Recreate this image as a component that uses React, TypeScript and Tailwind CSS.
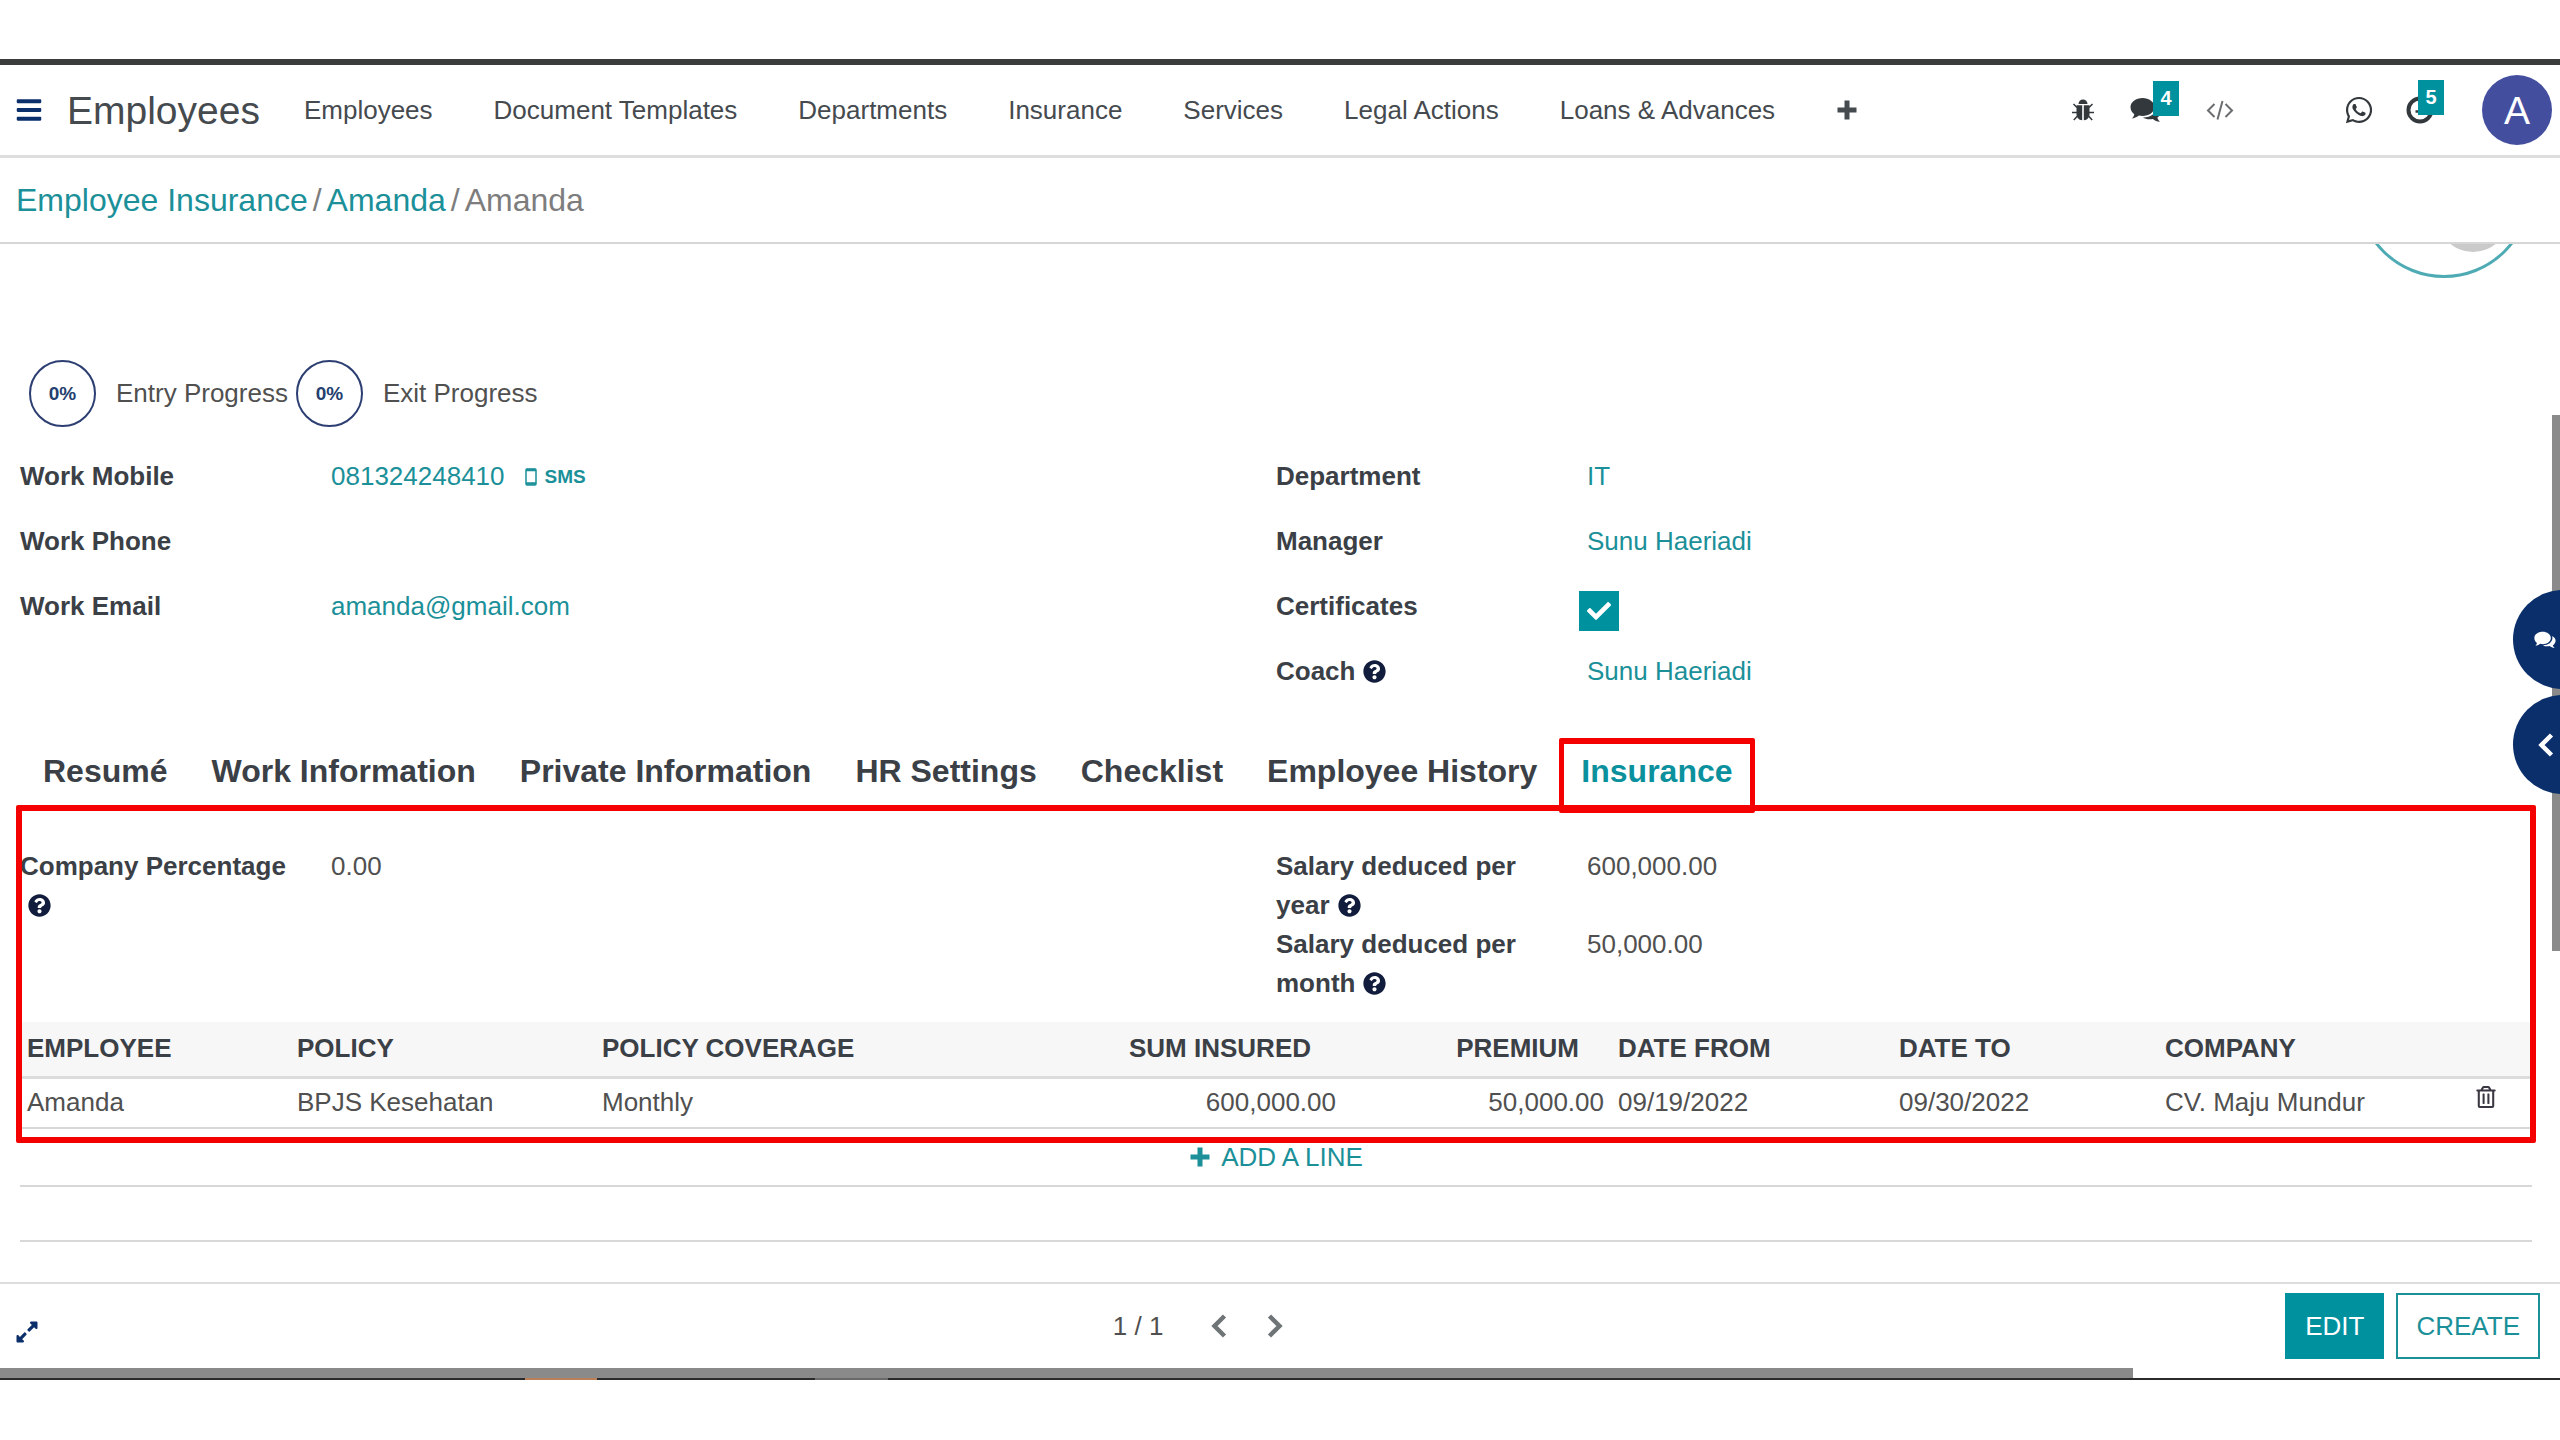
import React, { useState } from 'react';
import { FaBars, FaCheck, FaExpandAlt, FaQuestionCircle, FaRegTrashAlt, FaWhatsapp } from 'react-icons/fa';

const menuItems = ['Employees', 'Document Templates', 'Departments', 'Insurance', 'Services', 'Legal Actions', 'Loans & Advances'];

const tabs = ['Resumé', 'Work Information', 'Private Information', 'HR Settings', 'Checklist', 'Employee History', 'Insurance'];

const policies = [
  {
    employee: 'Amanda',
    policy: 'BPJS Kesehatan',
    coverage: 'Monthly',
    sumInsured: '600,000.00',
    premium: '50,000.00',
    dateFrom: '09/19/2022',
    dateTo: '09/30/2022',
    company: 'CV. Maju Mundur',
  },
];

const BugIcon = () => (
  <svg viewBox="0 0 22 22" className="w-[22px] h-[22px]" fill="currentColor" aria-hidden="true">
    <path d="M6.500 5a4.500 4.500 0 0 1 9 0z" />
    <path d="M4.500 6.200h5.700v15C6.500 21 4.500 18.500 4.500 14.500z" />
    <path d="M11.800 6.200h5.700v8.300c0 4-2 6.500-5.700 6.700z" />
    <path d="M5 8.500 1.500 5M5 13.500H0M5.500 17 1.800 21M17 8.500 20.500 5M17 13.500h5M16.500 17l3.700 4" fill="none" stroke="currentColor" strokeWidth="1.500" />
  </svg>
);

const CodeIcon = () => (
  <svg viewBox="0 0 28 20" className="w-7 h-5" fill="none" stroke="currentColor" strokeWidth="2" aria-hidden="true">
    <path d="M8.500 4 2 10.500l6.500 6.500M19.500 4 26 10.500 19.500 17M16.500 1l-5 18.500" />
  </svg>
);

const CommentsIcon = ({ className }: { className: string }) => (
  <svg viewBox="0 0 32 26" className={className} fill="currentColor" aria-hidden="true">
    <path d="M12.500 1C19 1 24.500 5 24.500 10s-5.500 9-12 9c-1.300 0-2.500-.1-3.600-.4C7.200 20 5 21.200 2 21.500c1.300-1.200 2-2.500 2.300-4.200C2 15.600.5 13 .5 10c0-5 5.500-9 12-9z" />
    <path d="M26.400 7c3 1.600 5 4 5 7 0 2.800-1.600 5-4 6.600.3 1.700 1.200 3 2.600 4.200-3-.2-5.400-1.500-7.200-2.900-3.800.8-7.300.2-10-1.400C20.500 20.700 26.800 16 26.800 10c0-1-.1-2-.4-3z" />
  </svg>
);

const ClockIcon = () => (
  <svg viewBox="0 0 28 28" className="w-7 h-7" fill="none" stroke="currentColor" aria-hidden="true">
    <circle cx="14" cy="14" r="11.500" strokeWidth="4" />
    <path d="M15 7.500v8H9.500" strokeWidth="2.500" />
  </svg>
);

const PlusIcon = () => (
  <svg viewBox="0 0 22 22" className="w-[22px] h-[22px]" aria-hidden="true">
    <path d="M11 1.500v19M1.500 11h19" stroke="currentColor" strokeWidth="5" />
  </svg>
);

const ChevronIcon = ({ direction }: { direction: 'left' | 'right' }) => (
  <svg viewBox="0 0 24 24" className="w-6 h-6" fill="none" stroke="currentColor" strokeWidth="4.500" aria-hidden="true">
    <path d={direction === 'left' ? 'M17.500 2 7.500 12l10 10' : 'M6.500 2l10 10-10 10'} />
  </svg>
);

const MobileIcon = () => (
  <svg viewBox="0 0 12 18" className="w-3 h-[18px]" fill="none" stroke="currentColor" aria-hidden="true">
    <rect x="1" y="1" width="10" height="16" rx="1" strokeWidth="1.500" />
    <path d="M1 2h10M1 15.500h10" strokeWidth="2.500" />
  </svg>
);

const HelpIcon = () => <FaQuestionCircle className="inline-block ml-2 w-[23px] h-[23px] align-[-3px] text-[#121c3c]" />;

interface FieldProps {
  label: string;
  help?: boolean;
  children?: React.ReactNode;
}

const Field: React.FC<FieldProps> = ({ label, help, children }) => (
  <div className="flex items-center h-[65px]">
    <div className="w-[311px] shrink-0 font-bold text-[#3b4046]">
      {label}
      {help && <HelpIcon />}
    </div>
    <div className="flex items-center text-[#1b9099]">{children}</div>
  </div>
);

const WrappedField: React.FC<FieldProps> = ({ label, children }) => (
  <div className="flex items-start leading-[39px]">
    <div className="w-[311px] shrink-0 pr-10 font-bold text-[#3b4046]">
      {label}
      <HelpIcon />
    </div>
    <div>{children}</div>
  </div>
);

const Progress = ({ value, label }: { value: string; label: string }) => (
  <div className="flex items-center gap-5">
    <div className="w-[67px] h-[67px] rounded-full border-2 border-[#2d3f72] flex items-center justify-center text-[19px] font-bold text-[#24406f]">
      {value}
    </div>
    <span>{label}</span>
  </div>
);

const Navbar = () => (
  <header className="flex items-center h-[93px] pl-[15px] pr-2 border-b-3 border-[#dedede] text-[#454a4f]">
    <button aria-label="Apps" className="text-[#0b2f6b]">
      <FaBars className="w-7 h-7" />
    </button>
    <a href="#employees" className="ml-6 text-[39px]">Employees</a>
    <nav className="ml-11 flex items-center gap-[61px]">
      {menuItems.map((item) => (
        <a key={item} href="#menu" className="whitespace-nowrap">{item}</a>
      ))}
      <button aria-label="Add menu"><PlusIcon /></button>
    </nav>
    <div className="ml-auto flex items-center text-[#33383d]">
      <button aria-label="Debug"><BugIcon /></button>
      <button aria-label="Messages" className="relative ml-9">
        <CommentsIcon className="w-8 h-[26px]" />
        <span className="absolute left-[23px] -top-4 w-[26px] h-[35px] flex items-center justify-center bg-[#00919f] text-white text-[20px] font-bold">4</span>
      </button>
      <button aria-label="Developer tools" className="ml-11 text-[#6a6d70]"><CodeIcon /></button>
      <button aria-label="WhatsApp" className="ml-[110px]"><FaWhatsapp className="w-[30px] h-[30px]" /></button>
      <button aria-label="Activities" className="relative ml-8">
        <ClockIcon />
        <span className="absolute left-3 -top-4 w-[26px] h-[35px] flex items-center justify-center bg-[#00919f] text-white text-[20px] font-bold">5</span>
      </button>
      <button aria-label="Account" className="ml-12 w-[70px] h-[70px] rounded-full bg-[#444e9f] text-white text-[39px]">A</button>
    </div>
  </header>
);

const InsuranceTable = () => (
  <table className="w-full table-fixed text-left">
    <colgroup>
      <col className="w-[270px]" />
      <col className="w-[305px]" />
      <col />
      <col className="w-[267px]" />
      <col className="w-[268px]" />
      <col className="w-[281px]" />
      <col className="w-[266px]" />
      <col className="w-[310px]" />
      <col className="w-[64px]" />
    </colgroup>
    <thead className="bg-[#f7f7f7] text-[#3b4046]">
      <tr className="h-[55px] border-b-3 border-[#dcdcdc]">
        <th className="px-[7px]">EMPLOYEE</th>
        <th className="px-[7px]">POLICY</th>
        <th className="px-[7px]">POLICY COVERAGE</th>
        <th className="pr-8 text-right">SUM INSURED</th>
        <th className="pr-8 text-right">PREMIUM</th>
        <th className="px-[7px]">DATE FROM</th>
        <th className="px-[7px]">DATE TO</th>
        <th className="px-[7px]">COMPANY</th>
        <th></th>
      </tr>
    </thead>
    <tbody>
      {policies.map((row) => (
        <tr key={row.policy} className="h-[51px] border-b-2 border-[#d8d8d8]">
          <td className="px-[7px]">{row.employee}</td>
          <td className="px-[7px]">{row.policy}</td>
          <td className="px-[7px]">{row.coverage}</td>
          <td className="px-[7px] text-right">{row.sumInsured}</td>
          <td className="px-[7px] text-right">{row.premium}</td>
          <td className="px-[7px]">{row.dateFrom}</td>
          <td className="px-[7px]">{row.dateTo}</td>
          <td className="px-[7px]">{row.company}</td>
          <td className="px-[7px]">
            <button aria-label="Delete row" className="block pb-3">
              <FaRegTrashAlt className="w-[22px] h-[22px] text-[#3a3742]" />
            </button>
          </td>
        </tr>
      ))}
    </tbody>
  </table>
);

export default function App() {
  const [activeTab, setActiveTab] = useState('Insurance');
  const [certified, setCertified] = useState(true);

  return (
    <div className="min-h-screen bg-white pt-[59px] font-['Liberation_Sans',Arial,sans-serif] text-[26px] leading-[39px] text-[#505050]">
      <div className="h-1.5 bg-[#3a3d3c]" />
      <Navbar />

      <div className="flex items-center h-[86px] gap-[5px] px-4 border-b-2 border-[#d6d6d6] text-[32px] text-[#7d7d7d]">
        <a href="#insurance" className="text-[#1b9099]">Employee Insurance</a>
        <span>/</span>
        <a href="#amanda" className="text-[#1b9099]">Amanda</a>
        <span>/</span>
        <span>Amanda</span>
      </div>

      <main className="relative overflow-hidden pl-5 pr-7 pt-[116px] pb-10">
        {/* Profile picture, scrolled mostly out of view */}
        <div className="absolute right-[29px] -top-[140px] w-[174px] h-[174px] rounded-full border-3 border-[#4fabb3]" />
        <div className="absolute right-[51px] -top-16 w-[72px] h-[72px] rounded-full bg-[#cacaca]" />

        <div className="flex gap-2 pl-[9px]">
          <Progress value="0%" label="Entry Progress" />
          <Progress value="0%" label="Exit Progress" />
        </div>

        <div className="grid grid-cols-2 mt-[17px]">
          <div>
            <Field label="Work Mobile">
              <a href="tel:081324248410">081324248410</a>
              <button className="flex items-center gap-2 ml-5 text-[19px] font-bold">
                <MobileIcon />
                SMS
              </button>
            </Field>
            <Field label="Work Phone" />
            <Field label="Work Email">
              <a href="mailto:amanda@gmail.com">amanda@gmail.com</a>
            </Field>
          </div>
          <div>
            <Field label="Department"><a href="#it">IT</a></Field>
            <Field label="Manager"><a href="#manager">Sunu Haeriadi</a></Field>
            <Field label="Certificates">
              <div className="relative -ml-2 mt-2">
                <input
                  type="checkbox"
                  aria-label="Certificates"
                  checked={certified}
                  onChange={(e) => setCertified(e.target.checked)}
                  className="block appearance-none w-10 h-10 border-2 border-[#00919f] checked:bg-[#00919f]"
                />
                {certified && <FaCheck className="absolute left-2 top-2 w-6 h-6 text-white pointer-events-none" />}
              </div>
            </Field>
            <Field label="Coach" help><a href="#coach">Sunu Haeriadi</a></Field>
          </div>
        </div>

        <div role="tablist" className="flex mt-[34px] pl-px">
          {tabs.map((tab) => (
            <button
              key={tab}
              role="tab"
              aria-selected={activeTab === tab}
              onClick={() => setActiveTab(tab)}
              className={`relative h-[67px] px-[22px] text-[32px] font-bold whitespace-nowrap ${activeTab === tab ? 'text-[#0b919d]' : 'text-[#3b4046]'}`}
            >
              {tab}
              {activeTab === tab && <span className="absolute inset-x-0 top-0 -bottom-2 border-x-5 border-y-6 border-[#f40000] rounded-xs" />}
            </button>
          ))}
        </div>

        <section className="relative">
          <div className="absolute -inset-x-1 top-0 -bottom-3.5 border-6 border-[#f40000] rounded-xs pointer-events-none" />
          <div className="grid grid-cols-2 pt-[42px] pb-[19px]">
            <div>
              <WrappedField label="Company Percentage">0.00</WrappedField>
            </div>
            <div>
              <WrappedField label="Salary deduced per year">600,000.00</WrappedField>
              <WrappedField label="Salary deduced per month">50,000.00</WrappedField>
            </div>
          </div>
          <InsuranceTable />
        </section>

        <div className="flex items-center justify-center h-[58px] border-b-2 border-[#d8d8d8]">
          <button className="flex items-center gap-2.5 text-[#1b9099]">
            <PlusIcon />
            ADD A LINE
          </button>
        </div>
        <div className="h-[55px] border-b-2 border-[#d8d8d8]" />

        {/* Scrollbar thumb and chatter toggles */}
        <div className="absolute right-0 top-[171px] w-2 h-[536px] bg-[#8a8a8a]" />
        <div className="absolute -right-[52px] top-[346px] flex flex-col gap-1.5">
          <button aria-label="Open chatter" className="w-[99px] h-[99px] pl-[21px] rounded-full bg-[#0b2f6b] text-white">
            <CommentsIcon className="w-[22px] h-[18px]" />
          </button>
          <button aria-label="Expand sidebar" className="w-[99px] h-[99px] pl-[21px] rounded-full bg-[#0b2f6b] text-white">
            <ChevronIcon direction="left" />
          </button>
        </div>
      </main>

      <footer className="grid grid-cols-[10fr_13fr] items-center pl-[15px] pr-5 py-[9px] border-t-2 border-[#dcdcdc]">
        <button aria-label="Full screen" className="justify-self-start pt-3 text-[#0b2f6b]">
          <FaExpandAlt className="w-6 h-6" />
        </button>
        <div className="flex items-center justify-between">
          <div className="flex items-center text-[#6f7476]">
            <span className="text-[#505050]">1 / 1</span>
            <button aria-label="Previous" className="ml-11"><ChevronIcon direction="left" /></button>
            <button aria-label="Next" className="ml-8"><ChevronIcon direction="right" /></button>
          </div>
          <div className="flex gap-3">
            <button className="h-[66px] px-[18px] bg-[#00919f] border-2 border-[#00919f] text-white">EDIT</button>
            <button className="h-[66px] px-[18px] border-2 border-[#1b9099] text-[#1b9099]">CREATE</button>
          </div>
        </div>
      </footer>

      <div className="h-2.5 w-5/6 bg-[#8a8a8a]" />
      <div className="flex h-0.5 bg-[#2b2b2b]">
        <div className="ml-[525px] w-[72px] bg-[#b9805a]" />
        <div className="ml-[218px] w-[73px] bg-[#6a6a6a]" />
      </div>
    </div>
  );
}
